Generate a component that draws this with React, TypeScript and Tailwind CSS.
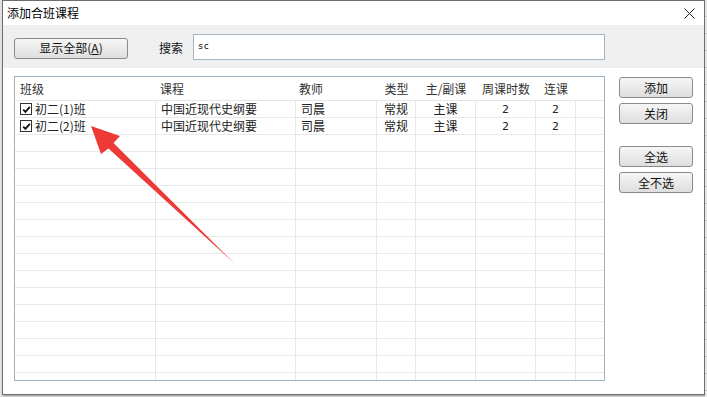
import React from "react";

const font = "font-['Microsoft_YaHei','Noto_Sans_CJK_SC',sans-serif]";
const cols = "grid grid-cols-[141px_140px_81px_39px_60px_60px_40px_1fr]";

const headers = [
  { label: "班级", align: "pl-[5px]" },
  { label: "课程", align: "pl-[4px]" },
  { label: "教师", align: "pl-[3px]" },
  { label: "类型", align: "justify-center" },
  { label: "主/副课", align: "justify-center" },
  { label: "周课时数", align: "justify-center" },
  { label: "连课", align: "justify-center" },
  { label: "", align: "" },
];

const rows = [
  { cls: "初二(1)班", course: "中国近现代史纲要", teacher: "司晨", type: "常规", main: "主课", hours: "2", link: "2" },
  { cls: "初二(2)班", course: "中国近现代史纲要", teacher: "司晨", type: "常规", main: "主课", hours: "2", link: "2" },
];

function WinButton({ children, className = "" }: { children: React.ReactNode; className?: string }) {
  return (
    <button
      className={`h-[21px] rounded-[3px] border border-[#8a8a8a] bg-gradient-to-b from-[#f6f6f6] to-[#dedede] text-[12px] leading-none text-[#111] ${className}`}
    >
      {children}
    </button>
  );
}

function CheckBox() {
  return (
    <span className="flex h-[12px] w-[12px] items-center justify-center border border-[#333] bg-white">
      <svg width="9" height="9" viewBox="0 0 9 9">
        <path d="M1.2 4.6 L3.4 6.9 L7.8 1.8" fill="none" stroke="#111" strokeWidth="1.8" />
      </svg>
    </span>
  );
}

export default function App() {
  const emptyRows = Array.from({ length: 15 });

  return (
    <div className={`relative h-[397px] w-[707px] overflow-hidden bg-[#e2e2e2] ${font}`}>
      <div className="flex h-[395px] w-[703px] ml-[2px] flex-col border border-[#6d6d6d] bg-white shadow-[1px_1px_2px_rgba(0,0,0,0.35)]">
        {/* title bar */}
        <div className="flex h-[24px] items-center justify-between bg-white pl-[4px] pr-[9px]">
          <span className="text-[12px] leading-none text-black">添加合班课程</span>
          <svg width="11" height="11" viewBox="0 0 11 11">
            <path d="M0.5 0.5 L10.5 10.5 M10.5 0.5 L0.5 10.5" stroke="#222" strokeWidth="1" />
          </svg>
        </div>

        {/* toolbar */}
        <div className="flex h-[43px] items-center bg-[#efefef] pl-[11px]">
          <WinButton className="mt-[3px] w-[114px]">
            显示全部(<span className="underline">A</span>)
          </WinButton>
          <span className="ml-[31px] mt-[2px] text-[12px] text-[#111]">搜索</span>
          <div className="ml-[10px] flex h-[26px] w-[412px] items-center border border-[#a3b6c2] bg-white pl-[4px]">
            <span className="font-['DejaVu_Sans_Mono',monospace] text-[9px] text-black">sc</span>
          </div>
        </div>

        {/* body */}
        <div className="flex flex-1 pl-[11px] pt-[8px]">
          <div className="h-[305px] w-[591px] overflow-hidden border border-[#9fb3bf] bg-white text-[12px] text-[#222]">
            <div className={`${cols} h-[24px] border-b border-[#e6e6e6]`}>
              {headers.map((h, i) => (
                <div key={i} className={`flex items-center ${h.align} text-[#333]`}>
                  {h.label}
                </div>
              ))}
            </div>
            {rows.map((r, i) => (
              <div key={i} className={`${cols} h-[17px] border-b border-[#e8e8e8] leading-none`}>
                <div className="flex items-center gap-[3px] border-r border-[#e8e8e8] pl-[5px]">
                  <CheckBox />
                  <span>{r.cls}</span>
                </div>
                <div className="flex items-center border-r border-[#e8e8e8] pl-[5px]">{r.course}</div>
                <div className="flex items-center border-r border-[#e8e8e8] pl-[5px]">{r.teacher}</div>
                <div className="flex items-center justify-center border-r border-[#e8e8e8]">{r.type}</div>
                <div className="flex items-center justify-center border-r border-[#e8e8e8]">{r.main}</div>
                <div className="flex items-center justify-center border-r border-[#e8e8e8] font-['DejaVu_Sans',sans-serif] text-[11px]">{r.hours}</div>
                <div className="flex items-center justify-center border-r border-[#e8e8e8] font-['DejaVu_Sans',sans-serif] text-[11px]">{r.link}</div>
                <div />
              </div>
            ))}
            {emptyRows.map((_, i) => (
              <div key={i} className={`${cols} h-[17px] border-b border-[#e8e8e8]`}>
                {Array.from({ length: 7 }).map((__, j) => (
                  <div key={j} className="border-r border-[#e8e8e8]" />
                ))}
                <div />
              </div>
            ))}
          </div>

          <div className="ml-[14px] flex flex-col pt-[1px]">
            <WinButton className="w-[74px]">添加</WinButton>
            <WinButton className="mt-[5px] w-[74px]">关闭</WinButton>
            <WinButton className="mt-[22px] w-[74px]">全选</WinButton>
            <WinButton className="mt-[5px] w-[74px]">全不选</WinButton>
          </div>
        </div>
      </div>

      {/* background sheet lines at the right */}
      <div className="absolute right-0 top-0 h-full w-[2px] bg-[repeating-linear-gradient(to_bottom,#e6e6e6_0,#e6e6e6_16px,#c8c8c8_16px,#c8c8c8_17px)]" />

      {/* red annotation arrow */}
      <svg className="pointer-events-none absolute left-0 top-0" width="707" height="397">
        <polygon
          points="91,126 101,154 108.5,148.5 235,264 113.5,143 120,136"
          fill="#ee3a36"
        />
      </svg>
    </div>
  );
}
